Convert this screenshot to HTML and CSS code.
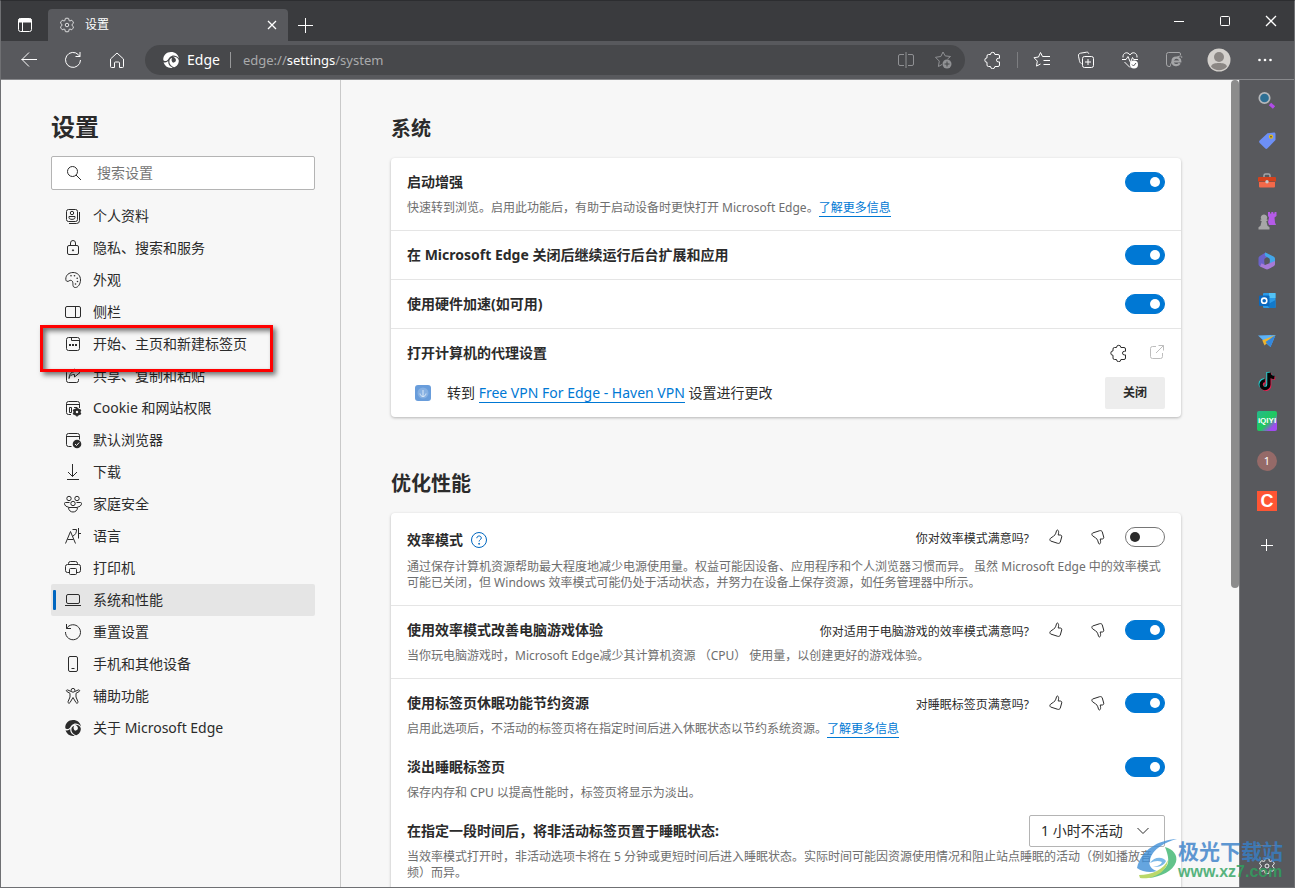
FILE: index.html
```html
<!DOCTYPE html>
<html lang="zh-CN">
<head>
<meta charset="utf-8">
<title>设置</title>
<link rel="stylesheet" href="styles.css">
</head>
<body>
<svg class="defs" aria-hidden="true">
  <symbol id="gear" viewBox="0 0 20 20"><path d="M1.91 7.38A8.5 8.5 0 0 1 3.69 4.3a.5.5 0 0 1 .54-.13l1.92.68a1 1 0 0 0 1.32-.76l.36-2a.5.5 0 0 1 .4-.4 8.53 8.53 0 0 1 3.55 0c.2.04.35.2.38.4l.37 2a1 1 0 0 0 1.32.76l1.92-.68a.5.5 0 0 1 .54.13 8.5 8.5 0 0 1 1.78 3.08c.06.2 0 .4-.15.54l-1.56 1.32a1 1 0 0 0 0 1.52l1.56 1.32a.5.5 0 0 1 .15.54 8.5 8.5 0 0 1-1.78 3.08.5.5 0 0 1-.54.13l-1.92-.68a1 1 0 0 0-1.32.76l-.37 2a.5.5 0 0 1-.38.4 8.53 8.53 0 0 1-3.56 0 .5.5 0 0 1-.39-.4l-.36-2a1 1 0 0 0-1.32-.76l-1.92.68a.5.5 0 0 1-.54-.13 8.5 8.5 0 0 1-1.78-3.08.5.5 0 0 1 .15-.54l1.56-1.32a1 1 0 0 0 0-1.52L2.06 7.92a.5.5 0 0 1-.15-.54z"/><circle cx="10" cy="10" r="2.2"/></symbol>
  <symbol id="puzzle" viewBox="0 0 18 18"><path d="M6.500 3.500a2.200 2.200 0 0 1 4.400 0h3.100a1.500 1.500 0 0 1 1.500 1.500v2.300h-1.200a1.800 1.800 0 0 0 0 3.600h1.200V14a1.500 1.500 0 0 1-1.500 1.500h-3.100a2.200 2.200 0 0 1-4.400 0H4.500A1.500 1.500 0 0 1 3 14v-2.700a2.200 2.200 0 0 1 0-4.400V5a1.500 1.500 0 0 1 1.500-1.500z"/></symbol>
  <symbol id="edge" viewBox="0 0 16 16"><g fill="currentColor" stroke="none"><path d="M.3 8C0 3.500 3.500.1 8 .1c4.200 0 7.400 2.700 7.900 6.300C14 4 11.200 3 8.700 3.900 5.800 4.900 5.600 8 3.300 8.900 2.100 9.300.8 8.900.3 8z"/><path d="M.6 10.200C2.500 11 4.200 10.200 5.200 8.800c-.3 3 1.300 5.600 4.500 6.900C5.500 16.600 1.700 14.200.6 10.200z"/><path d="M9.300 4.800c3.200-.7 6.100 1 6.500 3.700.1 3.300-1.900 6-4.800 6.800-3-1.100-4.900-3.600-4.600-6.300.2-1.600 1.200-2.700 2.700-2.900-1 1.700-.6 3.500 1 4.600 2-.2 3-1.300 2.800-2.900-.2-1.600-1.700-2.800-3.600-3z"/></g></symbol>
  <symbol id="up" viewBox="0 0 16 16"><path d="M8.600 1.600 7.800 4.200C7.400 5.500 6.800 6.300 5.600 7.100l-3 2.100c-1 .8-.9 2.100 0 2.800l7.100 2.300c1.300.4 2.300-.3 2.600-1.300l1.400-5c.3-1.200-.4-2-1.500-2h-2c.4-1.500.7-3.500 0-4.500-.5-.7-1.300-.6-1.600.1z"/></symbol>
  <symbol id="plus" viewBox="0 0 16 16"><path d="M8.500 1v15M1 8.500h15"/></symbol>
</svg>

<header class="tabs">
  <button class="workspace" aria-label="标签页操作"><svg class="i16" viewBox="0 0 16 16"><rect x="1.500" y="1.500" width="13" height="13" rx="2"/><path fill="currentColor" d="M2 2h12v3H2z"/><path d="M5.500 5v9"/></svg></button>
  <div class="tab"><svg class="i16"><use href="#gear"/></svg><span>设置</span><button aria-label="关闭标签页"><svg class="i10" viewBox="0 0 10 10"><path stroke-width="1.300" d="m1 1 8 8M9 1 1 9"/></svg></button></div>
  <button class="newtab" aria-label="新建标签页"><svg class="i16"><use href="#plus"/></svg></button>
  <div class="wincontrols">
    <button aria-label="最小化"><svg class="i12" viewBox="0 0 12 12"><path d="M1 6.500h10"/></svg></button>
    <button aria-label="最大化"><svg class="i12" viewBox="0 0 12 12"><rect x="1.500" y="1.500" width="9" height="9" rx="1"/></svg></button>
    <button aria-label="关闭"><svg class="i12" viewBox="0 0 12 12"><path stroke-width="1.300" d="m1 1 10 10M11 1 1 11"/></svg></button>
  </div>
</header>

<nav class="toolbar">
  <button aria-label="后退"><svg class="i18" viewBox="0 0 18 18"><path d="M17 8.500H1.500M9 1.500l-7 7 7 7"/></svg></button>
  <button aria-label="刷新"><svg class="i18" viewBox="0 0 18 18"><path d="M16.500 9a7.500 7.500 0 1 1-2-5.200L16 5.500M16 1v4.500h-4.500"/></svg></button>
  <button aria-label="主页"><svg class="i18" viewBox="0 0 18 18"><path d="M2.500 8 9 2l6.500 6v7.500a1 1 0 0 1-1 1h-3V12a1 1 0 0 0-1-1h-3a1 1 0 0 0-1 1v4.500h-3a1 1 0 0 1-1-1z"/></svg></button>
  <div class="address">
    <svg class="i16"><use href="#edge"/></svg><span class="brand">Edge</span><span class="bar"></span>
    <span class="url">edge://<b>settings</b>/system</span>
    <button aria-label="分屏"><svg class="i18" viewBox="0 0 18 18"><path d="M7 3.500H3a1.500 1.500 0 0 0-1.500 1.500v8A1.500 1.500 0 0 0 3 14.500h4M11 3.500h4a1.500 1.500 0 0 1 1.500 1.500v8a1.500 1.500 0 0 1-1.500 1.500h-4M9 1v16"/></svg></button>
    <button aria-label="添加到收藏夹"><svg class="i18" viewBox="0 0 18 18"><path d="m13.500 8 3-2.500-5.300-.6L9 1 6.800 5.500 1.500 6.300l3.800 3.800-.9 5.400L8 13.500"/><circle cx="13" cy="13" r="4.500" fill="currentColor" stroke="none"/><path stroke="#47484b" d="M13 10.500v5M10.500 13h5"/></svg></button>
  </div>
  <button aria-label="扩展"><svg class="i18"><use href="#puzzle"/></svg></button>
  <span class="divider"></span>
  <button aria-label="收藏夹"><svg class="i18" viewBox="0 0 18 18"><path d="M9.500 5.500 7.500 1.500 5.500 6l-4.500.7 3.300 3.400-.8 5L7.500 13M9.500 5.500H17M10.500 9.500H17M10.500 13.500H17"/></svg></button>
  <button aria-label="集锦"><svg class="i18" viewBox="0 0 18 18"><path d="M4.500 12.500C3 12 2.700 11 2.400 9.500L1.500 5.200C1.200 3.500 2 2.500 3.500 2.200l6-1c1.300-.2 2 .2 2.300 1.600M7.500 5.500h7a2 2 0 0 1 2 2v7a2 2 0 0 1-2 2h-7a2 2 0 0 1-2-2v-7a2 2 0 0 1 2-2zM11 8v6M8 11h6"/></svg></button>
  <button aria-label="浏览器概要"><svg class="i18" viewBox="0 0 18 18"><path d="M2 6.500c-.6-5 5-6.300 7-2.500 2-3.800 7.500-2.500 7 2.500M1 8.500h4l2-3 2.500 6 2-5 1.200 2H17M3.500 11 9 16.500"/><circle cx="13" cy="13.500" r="4" fill="currentColor" stroke="none"/><path stroke="#58595d" d="m11 13.500 1.500 1.500 2.500-3"/></svg></button>
  <button class="dim" aria-label="IE 模式"><svg class="i18" viewBox="0 0 18 18"><path d="M5 15.500H4A2.500 2.500 0 0 1 1.500 13V3.500a2 2 0 0 1 2-2H14A1.500 1.500 0 0 1 15.500 3v1"/><path stroke-width="2.200" d="M7 10.500h8.300c0-5.300-7.800-4.800-7.800 0 0 4.500 5.800 4.500 7.200 1.800"/><path d="M6 15.500c-2.500-1.500 4.500-10.500 9.500-10.500 1.500 0 1.500 1 1 2"/></svg></button>
  <button class="wide" aria-label="用户"><svg class="i24" viewBox="0 0 24 24"><g stroke="none"><circle cx="12" cy="12" r="11.500" fill="#d3d0cc"/><circle cx="12" cy="9" r="5" fill="#8b8784"/><path fill="#8b8784" d="M4 18.500C5 15.500 8 15 12 15s7 .5 8 3.500c-4 5-12 5-16 0z"/></g></svg></button>
  <button class="wide" aria-label="更多"><svg class="i18" viewBox="0 0 18 18"><g fill="currentColor" stroke="none"><circle cx="3.500" cy="9" r="1.300"/><circle cx="9" cy="9" r="1.300"/><circle cx="14.500" cy="9" r="1.300"/></g></svg></button>
</nav>

<div class="body">
  <aside class="side">
    <h1>设置</h1>
    <label class="search"><svg class="i16" viewBox="0 0 16 16"><circle cx="6.500" cy="6.500" r="5"/><path d="m10 10 5 5"/></svg><input type="text" placeholder="搜索设置" aria-label="搜索设置"></label>
    <nav class="menu">
      <a href="#"><svg class="i16" viewBox="0 0 16 16"><rect x="1.500" y="1.500" width="11" height="12" rx="2"/><path d="M14.500 4v8.500a3 3 0 0 1-3 3H4"/><circle cx="7" cy="5" r="1.700"/><path d="M4 8.500h6v1.200c0 2.200-6 2.200-6 0z"/></svg>个人资料</a>
      <a href="#"><svg class="i16" viewBox="0 0 16 16"><rect x="2.500" y="5.500" width="11" height="9" rx="1.500"/><path d="M5.500 5.500V3a2.500 2.500 0 0 1 5 0v2.500"/><circle cx="8" cy="10.300" r=".6" fill="currentColor"/></svg>隐私、搜索和服务</a>
      <a href="#"><svg class="i16" viewBox="0 0 16 16"><path d="M.8 7C.8 3 4 .5 8 .5c4.500 0 7.500 3 7.500 7.500 0 4-2.500 7.500-5 7.500-4.500 0-1-5.500-4-7-2-1-2.700 1.500-4.500.8C1 9 .8 8 .8 7z"/><g fill="currentColor" stroke="none"><circle cx="6" cy="3.800" r=".8"/><circle cx="9.500" cy="3.800" r=".8"/><circle cx="12.200" cy="6.200" r=".8"/><circle cx="12.500" cy="9.500" r=".8"/><circle cx="10.500" cy="12" r=".8"/></g></svg>外观</a>
      <a href="#"><svg class="i16" viewBox="0 0 16 16"><rect x=".5" y="2.500" width="15" height="11" rx="1.500"/><path d="M10.500 2.500v11"/></svg>侧栏</a>
      <a href="#"><svg class="i16" viewBox="0 0 16 16"><rect x="1.500" y="1.500" width="13" height="13" rx="2"/><path d="M6.500 1.500v3h8"/><path stroke-width="2" d="M4 9h2M7 9h2M10 9h2"/></svg>开始、主页和新建标签页</a>
      <a href="#"><svg class="i16" viewBox="0 0 16 16"><path d="M5 2.500H3.500a2 2 0 0 0-2 2v8a2 2 0 0 0 2 2h8a2 2 0 0 0 2-2V11M4 10.500c.5-3 2.500-4 5.500-4V9l5.500-4.500L9.500 1v2.500C6 4 4 6.500 4 10.500z"/></svg>共享、复制和粘贴</a>
      <a href="#"><svg class="i16" viewBox="0 0 16 16"><path d="M6 14.500H3.500a2 2 0 0 1-2-2v-9a2 2 0 0 1 2-2h9a2 2 0 0 1 2 2V8M1.500 4.500h13M4.500 7.500h2v5h-2zM9 7.500h3"/><circle cx="12" cy="12" r="2.500" stroke-width="2.500"/><path stroke-width="1.500" d="M12 7.500V10M12 14v2.500M8 9.800l2 1.200M14 13l2 1.200M8 14.200l2-1.200M14 11l2-1.200"/></svg>Cookie 和网站权限</a>
      <a href="#"><svg class="i16" viewBox="0 0 16 16"><path d="M6.500 14.500h-3a2 2 0 0 1-2-2v-9a2 2 0 0 1 2-2h9a2 2 0 0 1 2 2v4M1.500 4.500h13"/><circle cx="12" cy="12" r="4.300" fill="currentColor" stroke="none"/><path stroke="#f7f7f7" d="m10 12 1.500 1.500 2.700-3"/></svg>默认浏览器</a>
      <a href="#"><svg class="i16" viewBox="0 0 16 16"><path d="M7.500 0v12.500M3 8l4.500 4.500L12 8M2 15.500h12"/></svg>下载</a>
      <a href="#"><svg class="i16" viewBox="0 0 16 16"><circle cx="4" cy="2.500" r="2.200"/><circle cx="12" cy="2.500" r="2.200"/><circle cx="8" cy="7.500" r="2.200"/><path d="M4.500 6.500H.500a1 1 0 0 0-1 1c0 2 2 3.500 4 3.500M11.500 6.500h4a1 1 0 0 1 1 1c0 2-2 3.500-4 3.500M3.500 11.500h9c0 6-9 6-9 0z"/></svg>家庭安全</a>
      <a href="#"><svg class="i16" viewBox="0 0 16 16"><path d="M.5 15.500 5.500 3.500l5 12M2.500 11.500h6M7.500 1.500h4c0 3.500-1 5-3.500 6.500M13.500 0v10.500M13.500 5.500H16"/></svg>语言</a>
      <a href="#"><svg class="i16" viewBox="0 0 16 16"><path d="M3.500 4.500v-1a2 2 0 0 1 2-2h5a2 2 0 0 1 2 2v1M4 12.500H2.500a2 2 0 0 1-2-2v-4a2 2 0 0 1 2-2h11a2 2 0 0 1 2 2v4a2 2 0 0 1-2 2H12M5.500 8.500h5a1 1 0 0 1 1 1v4a1 1 0 0 1-1 1h-5a1 1 0 0 1-1-1v-4a1 1 0 0 1 1-1z"/></svg>打印机</a>
      <a href="#" class="current" aria-current="page"><svg class="i16" viewBox="0 0 16 16"><rect x="1.500" y="2.500" width="13" height="9" rx="1.500"/><path d="M0 13.500h16"/></svg>系统和性能</a>
      <a href="#"><svg class="i16" viewBox="0 0 16 16"><path d="M1.500 0v4.500H6M1.500 4.500A7.500 7.500 0 1 1 .5 8"/></svg>重置设置</a>
      <a href="#"><svg class="i16" viewBox="0 0 16 16"><rect x="3.500" y=".5" width="9" height="15" rx="1.500"/><path d="M6.500 12.500h3"/></svg>手机和其他设备</a>
      <a href="#"><svg class="i16" viewBox="0 0 16 16"><circle cx="8" cy="2.300" r="1.900"/><path d="M6.200 3.500 2.500 1.900C1.400 1.700.9 3 1.800 3.500L5 5.300V9l-2 4.800c-.3 1.300 1.300 2 2 .8L8 9.500l3 5.100c.7 1.200 2.300.5 2-.8L11 9V5.300l3.200-1.800c.9-.5.400-1.800-.7-1.600L9.800 3.500"/></svg>辅助功能</a>
      <a href="#"><svg class="i16"><use href="#edge"/></svg>关于 Microsoft Edge</a>
    </nav>
    <div class="callout"></div>
  </aside>

  <main class="main">
    <h2>系统</h2>
    <section class="card">
      <div class="row">
        <div class="head"><label class="title" for="t1">启动增强</label><input type="checkbox" id="t1" class="switch" checked></div>
        <p>快速转到浏览。启用此功能后，有助于启动设备时更快打开 Microsoft Edge。<a href="#">了解更多信息</a></p>
      </div>
      <div class="row"><div class="head"><label class="title" for="t2">在 Microsoft Edge 关闭后继续运行后台扩展和应用</label><input type="checkbox" id="t2" class="switch" checked></div></div>
      <div class="row"><div class="head"><label class="title" for="t3">使用硬件加速(如可用)</label><input type="checkbox" id="t3" class="switch" checked></div></div>
      <div class="row proxy">
        <div class="head"><span class="title">打开计算机的代理设置</span><span class="links"><svg class="i18"><use href="#puzzle"/></svg><a href="#" class="ext" aria-label="打开"><svg class="i16" viewBox="0 0 16 16"><path d="M7 1.500H3.500a2 2 0 0 0-2 2v8a2 2 0 0 0 2 2h8a2 2 0 0 0 2-2V8M7 8l7.500-7.500M9.500.500h5v5"/></svg></a></span></div>
        <div class="vpn"><svg class="i16" viewBox="0 0 16 16"><rect width="16" height="16" rx="3" fill="#699ddb" stroke="none"/><circle cx="8" cy="8" r="5.500" fill="#86b0e2" stroke="none"/><path stroke="#d9e8f8" d="M8 5v6.500M5 8.500c.5 4 5.500 4 6 0"/></svg><span>转到 <a href="#">Free VPN For Edge - Haven VPN</a> 设置进行更改</span><button class="off">关闭</button></div>
      </div>
    </section>

    <h2 class="second">优化性能</h2>
    <section class="card">
      <div class="row">
        <div class="head tall"><label class="title" for="t4">效率模式<svg class="i16 help" viewBox="0 0 16 16"><circle cx="8" cy="8" r="7.500"/><path d="M5.800 6.200C5.800 3.200 10.300 3.300 10.300 6c0 1.700-2.200 1.800-2.200 3.500"/><circle cx="8.100" cy="11.800" r=".5" fill="currentColor"/></svg></label>
          <span class="ask">你对效率模式满意吗?</span><button class="thumb" aria-label="满意"><svg class="i16"><use href="#up"/></svg></button><button class="thumb down" aria-label="不满意"><svg class="i16"><use href="#up"/></svg></button><input type="checkbox" id="t4" class="switch"></div>
        <p>通过保存计算机资源帮助最大程度地减少电源使用量。权益可能因设备、应用程序和个人浏览器习惯而异。 虽然 Microsoft Edge 中的效率模式可能已关闭，但 Windows 效率模式可能仍处于活动状态，并努力在设备上保存资源，如任务管理器中所示。</p>
      </div>
      <div class="row">
        <div class="head"><label class="title" for="t5">使用效率模式改善电脑游戏体验</label>
          <span class="ask">你对适用于电脑游戏的效率模式满意吗?</span><button class="thumb" aria-label="满意"><svg class="i16"><use href="#up"/></svg></button><button class="thumb down" aria-label="不满意"><svg class="i16"><use href="#up"/></svg></button><input type="checkbox" id="t5" class="switch" checked></div>
        <p>当你玩电脑游戏时，Microsoft Edge减少其计算机资源 （CPU） 使用量，以创建更好的游戏体验。</p>
      </div>
      <div class="row group">
        <div>
          <div class="head"><label class="title" for="t6">使用标签页休眠功能节约资源</label>
            <span class="ask">对睡眠标签页满意吗?</span><button class="thumb" aria-label="满意"><svg class="i16"><use href="#up"/></svg></button><button class="thumb down" aria-label="不满意"><svg class="i16"><use href="#up"/></svg></button><input type="checkbox" id="t6" class="switch" checked></div>
          <p>启用此选项后，不活动的标签页将在指定时间后进入休眠状态以节约系统资源。<a href="#">了解更多信息</a></p>
        </div>
        <div>
          <div class="head"><label class="title" for="t7">淡出睡眠标签页</label><input type="checkbox" id="t7" class="switch" checked></div>
          <p>保存内存和 CPU 以提高性能时，标签页将显示为淡出。</p>
        </div>
        <div class="timer">
          <div class="head"><label class="title" for="t8">在指定一段时间后，将非活动标签页置于睡眠状态:</label>
            <span class="select"><select id="t8"><option>1 小时不活动</option></select><svg class="i12" viewBox="0 0 12 12"><path d="m.5 3 5.500 5.500L11.500 3"/></svg></span></div>
          <p>当效率模式打开时，非活动选项卡将在 5 分钟或更短时间后进入睡眠状态。实际时间可能因资源使用情况和阻止站点睡眠的活动（例如播放音频）而异。</p>
        </div>
      </div>
    </section>
  </main>
  <div class="scroll"><div class="thumbbar"></div></div>

  <aside class="apps">
    <button aria-label="搜索"><svg class="i20" viewBox="0 0 20 20"><path stroke="#b04be8" stroke-width="3.500" d="m13 13 4 3.500"/><circle cx="7.500" cy="7" r="5.200" fill="#2d6f94" stroke="#b5b7ba" stroke-width="1.700"/></svg></button>
    <button aria-label="购物"><svg class="i20" viewBox="0 0 20 20"><path fill="#6d8ff5" stroke="none" d="M10.500 2.300 17 1.500c1 0 1.500.6 1.500 1.500v6l-8 8.300c-.8.800-1.600.8-2.400 0L2.700 12c-.8-.8-.8-1.600 0-2.400z"/><circle cx="14" cy="5.700" r="1.500" stroke="#e5ba1f" fill="#51552f" stroke-width="1.300"/></svg></button>
    <button aria-label="工具"><svg class="i20" viewBox="0 0 20 20"><path stroke="#a4a5a8" stroke-width="1.500" d="M7 6V4.500C7 3.500 7.500 3 8.500 3h3c1 0 1.500.5 1.500 1.500V6"/><path fill="#d4421d" stroke="none" d="M2 6h16a1 1 0 0 1 1 1v3.500H1V7a1 1 0 0 1 1-1z"/><path fill="#f2694a" stroke="none" d="M2 11h16v4.500a1 1 0 0 1-1 1H3a1 1 0 0 1-1-1z"/><circle cx="10" cy="10.700" r="1.700" fill="#c9cacc" stroke="none"/></svg></button>
    <button aria-label="游戏"><svg class="i20" viewBox="0 0 20 20"><g stroke="none"><path fill="#a7a7a7" d="M1.500 18.500v-2.200l2-1.500L4.700 10H3.500V8.500h1a3.100 3.100 0 1 1 5 0h1V10H9.300l1.200 4.800 2 1.500v2.200z"/><path fill="#b55be8" d="M11 1h2v1.500h1.300V1h2v1.500h1.200V1h2v4l-2 1.500.5 5 1 2.500H12l-1-3 1-4.500-1-1.500z"/></g></svg></button>
    <button aria-label="Microsoft 365"><svg class="i20" viewBox="0 0 20 20"><g stroke="none"><path fill="#6b62c9" d="m8.500 1.500 3 3.800-4 2.500V14L3 15.500c-1-.6-1.500-1.500-1.500-2.500V7.500c0-1 .5-2 1.400-2.500z"/><path fill="#43a6e8" d="m8.500 1.500 8 4c1 .6 1.500 1.400 1.500 2.500v5l-5.500-1V7.500L9 5.500c-1.500-1-1.500-3-.5-4z"/><path fill="#a67bd7" d="M4.500 12.200 8 14l10-4v3c0 1-.5 1.800-1.400 2.300L11.500 18c-1 .6-2 .6-3 0L3 15.500z"/><path fill="#58595d" d="m10 7 2.700 1.500V11L10 13l-2.500-1.500V8.500z"/></g></svg></button>
    <button aria-label="Outlook"><svg class="i20" viewBox="0 0 20 20"><g stroke="none"><rect x="6" y="2" width="12.500" height="15" rx="1" fill="#2a9be8"/><path fill="#53c2f5" d="M12 2h6.500v5H12z"/><path fill="#1279c9" d="m18.500 9-9 5 3 3h6z"/><rect x="2" y="4.500" width="10.500" height="10.500" rx="1" fill="#0a68bd"/></g><circle cx="7.200" cy="9.700" r="2.600" stroke="#fff" stroke-width="1.600"/></svg></button>
    <button aria-label="Drop"><svg class="i20" viewBox="0 0 20 20"><g stroke="none"><path fill="#5bb2f8" d="M1 4.500 18.500 4l-5 12-4-3.500z"/><path fill="#efb42d" d="M18.500 4 5.300 9.200 7.500 14.500z"/><path fill="#3388de" d="M18.500 4 8.500 11l5 5z"/></g></svg></button>
    <button aria-label="TikTok"><svg class="i20" viewBox="0 0 20 20"><g fill="none" stroke-width="3.300"><path stroke="#22d8d8" d="M11 1v12a3.900 3.900 0 1 1-4-4M11 1c.5 3 2.200 4.500 5.500 4.800"/><path stroke="#ef1e50" d="M12.700 2.500v12a3.900 3.900 0 1 1-4-4M12.700 2.500c.5 3 2.200 4.500 5.500 4.800"/><path stroke="#050505" d="M11.900 1.700v12a3.900 3.900 0 1 1-4-4M11.900 1.700c.5 3 2.200 4.500 5.500 4.800"/></g></svg></button>
    <button aria-label="爱奇艺"><span class="app iqiyi">iQIYI</span></button>
    <button aria-label="站点 1"><span class="app one">1</span></button>
    <button aria-label="站点 C"><span class="app cee">C</span></button>
    <button class="add" aria-label="添加"><svg class="i12" viewBox="0 0 12 12"><path d="M5.500 0v12M0 6.500h12"/></svg></button>
    <button class="prefs" aria-label="侧栏设置"><svg class="i18"><use href="#gear"/></svg></button>
  </aside>
</div>

<div class="watermark">
  <svg viewBox="0 0 42 40"><path fill="#3f8fd8" d="M41 0C22 1 5 11 1 29c5 4 14 5 20 3-6-2-9-6-7-12C17 10 29 3 41 0z"/><path fill="#3bb56e" d="M29 8c8 2 13 8 11 15-3 9-15 15-28 16 9-4 18-8 20-15 1-5-1-11-3-16z"/><path fill="#a9cf45" d="M3 36c13 0 25-6 29-15-1 12-15 20-28 18z"/><path fill="#5aa7e3" d="M14 24c4-6 12-7 16-2-2 5-9 7-14 5 5 1 9-1 10-4-4-2-8-1-12 1z"/></svg>
  <div><div class="wm-name">极光下载站</div><div class="wm-url">www.xz7.com</div></div>
</div>
</body>
</html>
```
FILE: styles.css
```css
* { box-sizing: border-box; }
body {
  margin: 0;
  height: 100vh;
  display: flex;
  flex-direction: column;
  overflow: hidden;
  position: relative;
  border: 1px solid #6f7073;
  border-top-color: #2c2d30;
  background: #58595d;
  color: #2b2b2b;
  font: 14px/20px "Noto Sans", "Noto Sans CJK SC", sans-serif;
}
h1, h2, p { margin: 0; }
button { border: 0; padding: 0; background: none; color: inherit; font: inherit; display: flex; align-items: center; justify-content: center; }
a { color: #0078d4; text-decoration: none; }
svg { fill: none; stroke: currentColor; stroke-width: 1; flex: none; display: block; overflow: visible; }
.defs { position: absolute; width: 0; height: 0; }
.i10 { width: 10px; height: 10px; }
.i12 { width: 12px; height: 12px; }
.i16 { width: 16px; height: 16px; }
.i18 { width: 18px; height: 18px; }
.i20 { width: 20px; height: 20px; }
.i24 { width: 24px; height: 24px; }

/* Tab strip */
.tabs { height: 40px; flex: none; display: flex; background: #3a3b3e; color: #fff; padding-top: 8px; }
.workspace { width: 47px; }
.tab { width: 240px; display: flex; align-items: center; gap: 10px; padding: 0 11px; background: #58595d; border-radius: 4px 4px 0 0; font-size: 12px; }
.tab span { flex: 1; }
.newtab { width: 34px; }
.wincontrols { margin-left: auto; display: flex; height: 24px; }
.wincontrols button { width: 46px; }

/* Toolbar */
.toolbar { height: 39px; flex: none; display: flex; align-items: center; padding: 0 6px; color: #fff; border-bottom: 1px solid #87888b; }
.toolbar button { width: 44px; height: 36px; }
.toolbar .wide { width: 46px; }
.toolbar .dim { color: #a5a6a8; }
.address { flex: 1; height: 30px; margin: 0 6px; padding: 0 4px 0 18px; border-radius: 15px; background: #47484b; display: flex; align-items: center; }
.address button { width: 37px; color: #909194; }
.brand { margin-left: 8px; }
.bar { width: 1px; height: 16px; margin: 0 12px 0 10px; background: #97989a; }
.url { flex: 1; color: #a9aaac; font-size: 13px; }
.url b { font-weight: 400; color: #fff; }
.divider { width: 1px; height: 16px; margin: 0 2px; background: #7d7e81; }

.body { flex: 1; min-height: 0; display: flex; background: #f7f7f7; }

/* Settings menu */
.side { width: 340px; flex: none; padding: 31px 25px 0 50px; border-right: 1px solid #c9c9c9; position: relative; }
h1 { font-size: 24px; line-height: 32px; font-weight: 700; margin-bottom: 13px; }
.search { height: 34px; display: flex; align-items: center; gap: 15px; padding: 0 14px; background: #fff; border: 1px solid #b4b4b4; border-radius: 2px; margin-bottom: 10px; }
.search input { flex: 1; min-width: 0; border: 0; padding: 0; outline: 0; background: none; font: inherit; }
.search input::placeholder { color: #767676; }
.menu a { height: 32px; display: flex; align-items: center; gap: 12px; padding-left: 14px; color: #2b2b2b; border-radius: 2px; }
.menu .current { background: #e5e5e5; padding-left: 2px; }
.menu .current::before { content: ""; width: 3px; height: 20px; background: #0067c0; border-radius: 1px; margin-right: -3px; }
.callout { position: absolute; left: 39px; top: 245px; width: 233px; height: 47px; border: 3px solid #f00; box-shadow: 3px 3px 5px #0008, inset 3px 3px 5px #0008; }

/* Content */
.main { flex: 1; min-width: 0; padding: 35px 50px 0; overflow: hidden; }
h2 { font-size: 20px; line-height: 28px; font-weight: 700; margin-bottom: 15px; }
h2.second { margin-top: 53px; }
.card { background: #fff; border-radius: 4px; box-shadow: 0 1px 3px #0004; }
.row { padding: 14px 16px; border-bottom: 1px solid #e5e5e5; }
.row:last-child { border: 0; }
.head { display: flex; align-items: flex-start; gap: 12px; }
.title { margin-right: auto; font-weight: 700; display: flex; align-items: center; gap: 8px; }
.tall .title { height: 26px; }
.tall + p { margin-top: 6px; }
.help { color: #0067c0; }
p { margin-top: 8px; font-size: 12px; line-height: 16px; color: #6e6e6e; }
p a, .vpn a { border-bottom: 1px solid; }
.ask { font-size: 12px; line-height: 24px; }
.head:has(.ask) { height: 20px; }
.head.tall { height: 26px; }
.thumb { width: 30px; height: 20px; }
.down { transform: scaleY(-1); }
.switch { appearance: none; width: 40px; height: 20px; margin: 0; padding: 0 4px; border: 1px solid #767676; border-radius: 10px; background: #fff; display: flex; align-items: center; flex: none; }
.switch::before { content: ""; width: 10px; height: 10px; border-radius: 5px; background: #2b2b2b; }
.switch:checked { background: #0078d4; border-color: #0078d4; justify-content: flex-end; }
.switch:checked::before { background: #fff; }
.proxy { padding-bottom: 8px; }
.links { display: flex; align-items: center; gap: 21px; height: 20px; }
.ext { color: #bdbdbd; }
.vpn { margin-top: 14px; padding-left: 8px; display: flex; align-items: center; gap: 16px; }
.off { width: 60px; height: 32px; margin-left: auto; background: #ededed; border-radius: 2px; font-size: 12px; font-weight: 700; }
.group { display: flex; flex-direction: column; gap: 20px; }
.timer { margin-top: -6px; }
.timer .head { align-items: center; }
.timer p { margin-top: 2px; }
.select { width: 136px; height: 32px; display: flex; align-items: center; border: 1px solid #b4b4b4; border-radius: 2px; padding: 0 15px 0 11px; background: #fff; }
.select select { flex: 1; min-width: 0; appearance: none; border: 0; padding: 0; background: none; color: inherit; font: inherit; }

.scroll { width: 9px; flex: none; border-right: 1px solid #77787b; }
.thumbbar { height: 63%; background: #8c8c8c; border-radius: 4px; }

/* App sidebar */
.apps { width: 54px; flex: none; padding-top: 1px; background: #58595d; color: #fff; display: flex; flex-direction: column; }
.apps button { height: 40px; flex: none; }
.app { width: 20px; height: 20px; display: block; text-align: center; color: #fff; line-height: 20px; }
.iqiyi { background: linear-gradient(135deg, #25b98d, #1fc95d 55%, #a04bf0 80%); border-radius: 2px; font-family: "Liberation Sans", sans-serif; font-size: 8px; font-weight: 700; }
.one { background: #956a68; border-radius: 10px; font-size: 11px; }
.cee { background: #fe5534; font-family: "Liberation Sans", sans-serif; font-size: 18px; font-weight: 700; }
.apps .add { margin-top: 4px; }
.apps .prefs { margin: auto 14px 2px; border-top: 1px solid #77787b; }

.watermark { position: absolute; right: 11px; bottom: 7px; display: flex; align-items: center; opacity: .8; pointer-events: none; }
.watermark svg { width: 42px; height: 40px; stroke: none; }
.wm-name { color: #377fc8; font-size: 21px; line-height: 26px; font-weight: 700; }
.wm-url { color: #2fa35f; font: 700 16px/16px "Liberation Sans", sans-serif; }
```
